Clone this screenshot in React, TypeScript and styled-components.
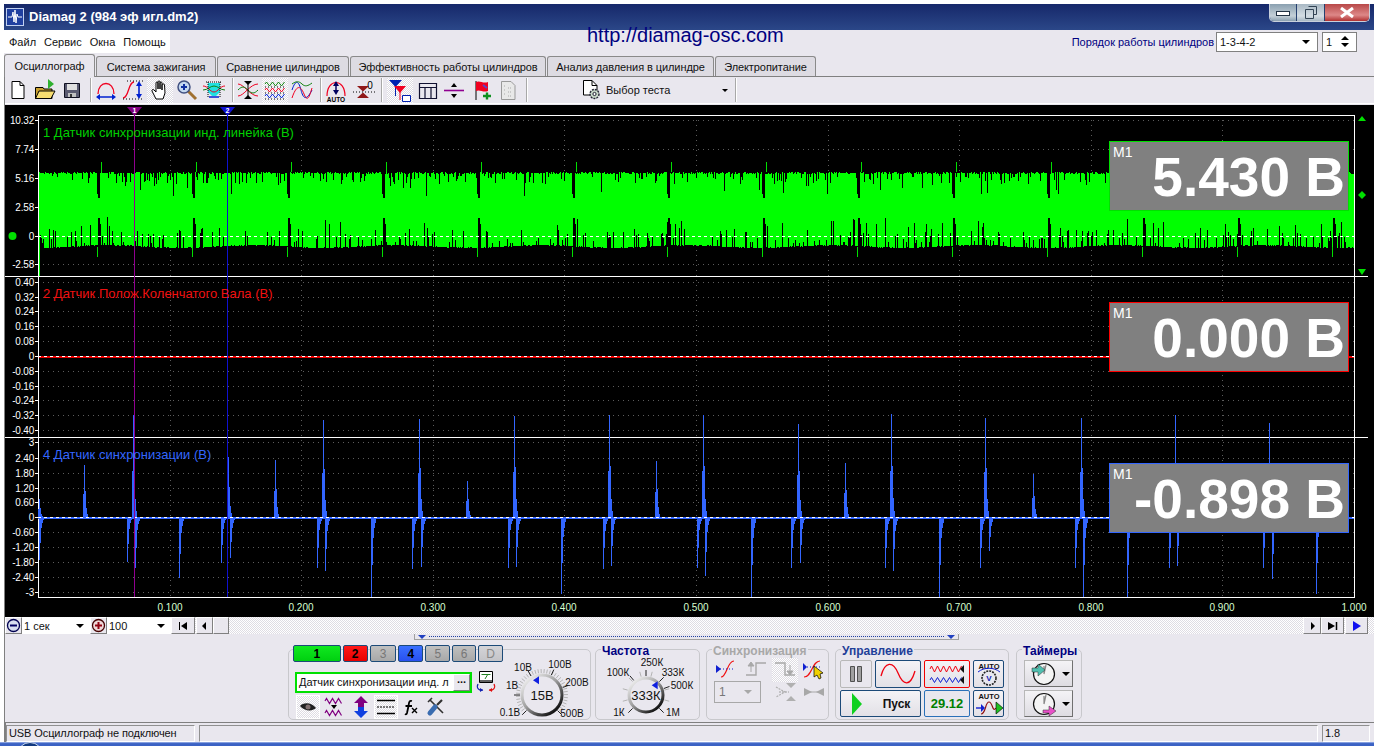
import React from 'react';
import styled, { createGlobalStyle } from 'styled-components';

const GlobalStyle = createGlobalStyle`
  html, body {
    margin: 0;
    padding: 0;
    background: #fff;
    font-family: "Liberation Sans", Arial, sans-serif;
  }
`;

const PANEL = '#e9e7ee';
const NAVY = '#000080';
const CHECKER = 'repeating-conic-gradient(#fff 0 25%, #dedce3 0 50%) 0 0 / 2px 2px';

const Screen = styled.div`
  width: 1374px;
  height: 746px;
  overflow: hidden;
  box-sizing: border-box;
  padding: 4px 0 0 4px;
  display: flex;
  flex-direction: column;
  background: #fff;
  font-size: 11px;
  color: #111;
`;

const TitleBar = styled.div`
  height: 26px;
  flex: none;
  display: flex;
  align-items: flex-start;
  background: linear-gradient(#16286a, #2b4788);
  color: #fff;
`;

const AppIcon = styled.svg`
  width: 18px;
  height: 18px;
  margin: 4px 5px 0 2px;
  flex: none;
`;

const TitleText = styled.span`
  font-size: 13px;
  font-weight: bold;
  line-height: 26px;
  white-space: nowrap;
`;

const CaptionButtons = styled.div`
  margin-left: auto;
  margin-right: 4px;
  display: flex;
  height: 17px;
  border: 1px solid #c8d0dc;
  border-top: none;
  border-radius: 0 0 5px 5px;
  overflow: hidden;
`;

const CaptionButton = styled.div<{ $w: number; $tone: string }>`
  width: ${p => p.$w}px;
  display: flex;
  align-items: center;
  justify-content: center;
  background: ${p => p.$tone};
  border-right: 1px solid #26406f;
  &:last-child { border-right: none; }
`;

const TopRow = styled.div`
  height: 23px;
  flex: none;
  display: flex;
  background: ${PANEL};
`;

const MenuBar = styled.div`
  width: 166px;
  box-sizing: border-box;
  padding-left: 5px;
  display: flex;
  gap: 8px;
  align-items: center;
  background: #fff;
  white-space: nowrap;
  font-size: 11px;
`;

const SiteLink = styled.div`
  margin-left: 417px;
  margin-top: -3px;
  font-size: 20px;
  color: ${NAVY};
  white-space: nowrap;
  line-height: 16px;
`;

const OrderBox = styled.div`
  margin-left: auto;
  margin-right: 14px;
  display: flex;
  align-items: center;
  gap: 1px;
`;

const OrderLabel = styled.span`
  color: ${NAVY};
  font-size: 11px;
  white-space: nowrap;
  margin-right: 1px;
`;

const OrderField = styled.div<{ $w: number }>`
  width: ${p => p.$w}px;
  height: 20px;
  box-sizing: border-box;
  border: 1px solid #808080;
  background: #fff;
  display: flex;
  align-items: center;
  justify-content: space-between;
  padding: 0 7px 0 3px;
  font-size: 11px;
  margin-right: 3px;
`;

const ArrowDown = styled.span`
  width: 0;
  height: 0;
  border-left: 4px solid transparent;
  border-right: 4px solid transparent;
  border-top: 4px solid #000;
`;

const SpinArrows = styled.span`
  display: flex;
  flex-direction: column;
  gap: 3px;
`;

const ArrowUp = styled.span`
  width: 0;
  height: 0;
  border-left: 4px solid transparent;
  border-right: 4px solid transparent;
  border-bottom: 4px solid #000;
`;

const TabRow = styled.div`
  height: 24px;
  flex: none;
  box-sizing: border-box;
  display: flex;
  gap: 1px;
  align-items: flex-end;
  background: ${PANEL};
  border-bottom: 1px solid #808080;
`;

const Tab = styled.div<{ $w: number; $active?: boolean }>`
  width: ${p => p.$w}px;
  height: ${p => (p.$active ? 23 : 20)}px;
  box-sizing: border-box;
  border: 1px solid #8a8a8a;
  border-bottom: none;
  border-radius: 3px 3px 0 0;
  background: ${p => (p.$active ? PANEL : '#dddbe2')};
  display: flex;
  align-items: center;
  justify-content: center;
  white-space: nowrap;
  font-size: 11px;
  letter-spacing: -0.08px;
  position: relative;
  margin-bottom: ${p => (p.$active ? -1 : 0)}px;
`;

const Body = styled.div`
  flex: none;
  border-left: 1px solid #808080;
  background: ${PANEL};
`;

const Toolbar = styled.div`
  height: 27px;
  box-sizing: border-box;
  display: flex;
  align-items: center;
  border-bottom: 1px solid #fff;
  margin-bottom: 1px;
`;

const ToolGroup = styled.div<{ $shift?: number }>`
  display: flex;
  gap: 1px;
  margin-left: ${p => p.$shift || 0}px;
`;

const ToolButton = styled.div<{ $active?: boolean }>`
  width: 26px;
  height: 25px;
  display: flex;
  align-items: center;
  justify-content: center;
  background: ${p => (p.$active ? CHECKER : 'transparent')};
`;

const ToolSep = styled.div`
  width: 1px;
  height: 24px;
  margin: 0 2px 0 5px;
  background: #a8a8a8;
  box-shadow: 1px 0 0 #fff;
`;

const TestSelect = styled.div`
  width: 201px;
  box-sizing: border-box;
  padding-left: 51px;
  display: flex;
  align-items: center;
  gap: 2px;
  font-size: 11px;
`;

const TestArrow = styled(ArrowDown)`
  margin-left: 50px;
  border-width: 3px 3px 0 3px;
`;

const PlotArea = styled.div`
  position: relative;
  height: 512px;
  background: #000;
`;

const PlotCanvas = styled.svg`
  display: block;
  width: 1369px;
  height: 512px;
  font-family: "Liberation Sans", Arial, sans-serif;
`;

const ChannelLabel = styled.div<{ $top: number; $color: string }>`
  position: absolute;
  left: 38px;
  top: ${p => p.$top}px;
  color: ${p => p.$color};
  font-size: 13px;
  line-height: 14px;
  white-space: nowrap;
`;

const Readout = styled.div<{ $top: number; $color: string }>`
  position: absolute;
  right: 25px;
  top: ${p => p.$top}px;
  width: 240px;
  height: 70px;
  box-sizing: border-box;
  background: #808080;
  border: 1px solid ${p => p.$color};
  color: #fff;
`;

const ReadoutTag = styled.span`
  position: absolute;
  left: 3px;
  top: 2px;
  font-size: 14px;
`;

const ReadoutValue = styled.div`
  text-align: right;
  padding-right: 3px;
  font-size: 55px;
  font-weight: bold;
  line-height: 70px;
  white-space: nowrap;
`;

const ScrollRow = styled.div`
  height: 17px;
  display: flex;
  align-items: stretch;
  background: ${CHECKER};
`;

const RaisedButton = styled.div<{ $w: number }>`
  width: ${p => p.$w}px;
  flex: none;
  box-sizing: border-box;
  display: flex;
  align-items: center;
  justify-content: center;
  background: ${PANEL};
  border: 1px solid;
  border-color: #fff #808080 #808080 #fff;
`;

const ScaleCombo = styled.div<{ $w: number }>`
  width: ${p => p.$w}px;
  flex: none;
  box-sizing: border-box;
  background: #fff;
  display: flex;
  align-items: center;
  justify-content: space-between;
  padding: 0 6px 0 2px;
  font-size: 11px;
`;

const ScrollGap = styled.div<{ $w: number }>`
  width: ${p => p.$w}px;
  flex: none;
`;

const ScrollTrack = styled.div`
  flex: 1;
`;

const Deck = styled.div`
  position: relative;
  height: 88px;
  box-sizing: border-box;
  padding: 15px 0 0 283px;
  display: flex;
  align-items: flex-start;
`;

const SplitHandle = styled.div`
  position: absolute;
  left: 409px;
  top: 0;
  width: 545px;
  height: 6px;
  box-sizing: border-box;
  border: 1px solid #a0a0a0;
  border-top: none;
  display: flex;
  align-items: center;
  justify-content: space-between;
  padding: 0 3px 0 3px;
`;

const SplitDots = styled.span`
  flex: 1;
  margin: 0 3px;
  border-top: 1px dotted #2040a0;
`;

const SplitArrow = styled.span`
  width: 0;
  height: 0;
  border-left: 4px solid transparent;
  border-right: 4px solid transparent;
  border-top: 4px solid #2040c0;
`;

const Group = styled.div<{ $w: number; $gap: number }>`
  position: relative;
  flex: none;
  width: ${p => p.$w}px;
  height: 71px;
  box-sizing: border-box;
  margin-right: ${p => p.$gap}px;
  border: 1px solid #c8c8cc;
  border-radius: 5px;
`;

const GroupTitle = styled.span<{ $color: string }>`
  position: absolute;
  left: 5px;
  top: -6px;
  padding: 0 1px;
  background: ${PANEL};
  color: ${p => p.$color};
  font-size: 12px;
  font-weight: bold;
  line-height: 14px;
  white-space: nowrap;
`;

const ChannelColumn = styled.div`
  position: absolute;
  left: 4px;
  top: -5px;
  width: 210px;
  display: flex;
  flex-direction: column;
  z-index: 1;
`;

const ChannelRow = styled.div`
  display: flex;
  gap: 2px;
`;

const ChannelButton = styled.div<{ $w: number; $bg: string; $fg: string }>`
  width: ${p => p.$w}px;
  height: 17px;
  box-sizing: border-box;
  border: 1px solid #1c4a78;
  border-radius: 2px;
  background: ${p => p.$bg};
  color: ${p => p.$fg};
  font-size: 12px;
  font-weight: ${p => (p.$fg === '#000' ? 'bold' : 'normal')};
  display: flex;
  align-items: center;
  justify-content: center;
`;

const SensorRow = styled.div`
  display: flex;
  align-items: center;
  margin: 8px 0 0 2px;
  gap: 3px;
`;

const SensorField = styled.div`
  width: 177px;
  height: 21px;
  box-sizing: border-box;
  border: 2px solid #00e000;
  background: #fff;
  display: flex;
  align-items: center;
  justify-content: space-between;
  padding: 0 0 0 2px;
  font-size: 11px;
  white-space: nowrap;
`;

const DotsButton = styled(RaisedButton)`
  height: 17px;
  font-size: 11px;
  font-weight: bold;
  line-height: 8px;
  align-items: flex-start;
`;

const ChannelTools = styled.div`
  display: flex;
  margin: 1px 0 0 3px;
`;

const ChannelTool = styled.div<{ $w: number; $active?: boolean }>`
  width: ${p => p.$w}px;
  height: 24px;
  box-sizing: border-box;
  display: flex;
  align-items: center;
  justify-content: center;
  background: ${p => (p.$active ? CHECKER : 'transparent')};
  border: ${p => (p.$active ? '1px solid #fff' : 'none')};
`;

const KnobSvg = styled.svg<{ $left: number }>`
  position: absolute;
  left: ${p => p.$left}px;
  top: 8px;
  font-family: "Liberation Sans", Arial, sans-serif;
`;

const SyncGrid = styled.div`
  display: grid;
  grid-template-columns: repeat(4, 29px);
  grid-auto-rows: 22px;
  gap: 1px 0;
  padding: 8px 0 0 5px;
  align-items: center;
  justify-items: center;
`;

const SyncCombo = styled.div`
  grid-column: span 2;
  width: 47px;
  height: 22px;
  box-sizing: border-box;
  justify-self: start;
  margin-left: 2px;
  border: 1px solid #a8a8a8;
  display: flex;
  align-items: center;
  justify-content: space-between;
  padding: 0 8px 0 4px;
  font-size: 12px;
  color: #777;
`;

const GreyArrow = styled(ArrowDown)`
  border-top-color: #a8a8a8;
`;

const ControlGrid = styled.div`
  display: grid;
  grid-template-columns: 32px 46px 46px 31px;
  grid-template-rows: 28px 27px;
  gap: 2px 3px;
  padding: 10px 0 0 4px;
`;

const ControlButton = styled.div<{ $border?: string; $span?: number; $flat?: boolean }>`
  grid-column: span ${p => p.$span || 1};
  box-sizing: border-box;
  border: 1px solid ${p => p.$border || '#1c4a78'};
  border-radius: 2px;
  background: ${p => (p.$flat ? PANEL : 'linear-gradient(#f4f3f6, #e2e0e6)')};
  display: flex;
  align-items: center;
  justify-content: center;
  font-weight: bold;
  font-size: 12px;
  white-space: nowrap;
`;

const StartLabel = styled.span`
  margin-left: 20px;
`;

const TimeValue = styled.span`
  color: #008000;
  font-size: 13px;
`;

const TimerColumn = styled.div`
  display: flex;
  flex-direction: column;
  gap: 3px;
  padding: 10px 0 0 7px;
`;

const TimerButton = styled.div`
  width: 49px;
  height: 27px;
  box-sizing: border-box;
  border: 1px solid;
  border-color: #b8b8b8 #707070 #707070 #b8b8b8;
  background: linear-gradient(#f4f3f6, #dedce2);
  display: flex;
  align-items: center;
  gap: 5px;
  padding-left: 6px;
`;

const StatusBar = styled.div`
  height: 20px;
  box-sizing: border-box;
  border-top: 1px solid #808080;
  border-left: 1px solid #808080;
  padding: 2px 4px 0 0;
  display: flex;
  gap: 4px;
  background: ${PANEL};
`;

const StatusCell = styled.div<{ $w?: number }>`
  ${p => (p.$w ? `width: ${p.$w}px; flex: none;` : 'flex: 1;')}
  height: 17px;
  box-sizing: border-box;
  border: 1px solid;
  border-color: #909090 #fff #fff #909090;
  padding-left: 2px;
  font-size: 11px;
  letter-spacing: -0.1px;
  line-height: 15px;
  white-space: nowrap;
`;

const Taskbar = styled.div`
  height: 4px;
  flex: 1;
  margin-left: -4px;
  background: linear-gradient(#a8bcec, #3b62c4 40%);
  display: flex;
`;

const StartOrb = styled.div`
  width: 26px;
  height: 26px;
  margin-left: 17px;
  border-radius: 50%;
  border: 1px solid #d0ddf0;
  box-sizing: border-box;
  background: #123a80;
`;

// ---- plot data ----

const makeRandom = (seed: number) => () => {
  seed = (seed * 16807) % 2147483647;
  return seed / 2147483647;
};

const X0 = 38;
const X1 = 1354;

const greenTrace = (() => {
  const r = makeRandom(4242);
  let band = 'M39 247V276';
  let notch = '';
  let top = '';
  for (let x = X0 + 1; x < X1; x++) {
    const t = 172 + r() * 2;
    const b = 246 + Math.sin(x / 23) * 1.4 + r();
    band += `M${x} ${t.toFixed(0)}V${b.toFixed(0)}`;
    const pick = r();
    if (pick < 0.2) {
      notch += `M${x} 171V${(176 + r() * (r() < 0.25 ? 20 : 8)).toFixed(0)}`;
    }
    if (pick > 0.76) {
      notch += `M${x} 249V${(243 - r() * (r() < 0.35 ? 26 : 14)).toFixed(0)}`;
    }
  }
  for (let p = 98; p < X1; p += 95) {
    notch += `M${p - 1} 171V194M${p} 171V198M${p + 1} 171V198M${p} 218V249M${p + 1} 218V249M${p + 2} 224V249`;
    top += `M${p + 3} 162V172M${p - 1} 247V257`;
  }
  return { band, notch, top };
})();

const upSpikes: [number, number][] = [
  [39, 499], [84, 465], [133, 415], [228, 457], [275, 460], [323, 420], [419, 419], [467, 481],
  [514, 416], [609, 415], [656, 461], [703, 415], [798, 424], [845, 463], [891, 414],
  [985, 418], [1033, 474], [1081, 418], [1175, 415], [1269, 423]
];

const downSpikes: [number, number][] = [
  [39, 560], [127, 562], [135, 568], [179, 578], [221, 563], [230, 558], [317, 568], [325, 571],
  [371, 597], [412, 569], [421, 567], [508, 568], [516, 567], [561, 594], [603, 569], [611, 566],
  [697, 568], [705, 576], [751, 597], [791, 568], [800, 563], [885, 568], [893, 571], [939, 597],
  [980, 568], [989, 551], [1075, 568], [1083, 597], [1127, 597], [1169, 568], [1177, 566],
  [1263, 568], [1272, 579], [1316, 594]
];

const blueTrace = (() => {
  const base = 517;
  let d = '';
  upSpikes.forEach(([x, y]) => {
    const h = base - y;
    d += `M${x} ${base}V${y}`;
    d += `M${x - 1} ${base}V${(base - h * 0.45).toFixed(0)}`;
    d += `M${x + 1} ${base}V${(base - h * 0.5).toFixed(0)}`;
    d += `M${x + 2} ${base}V${(base - h * 0.18).toFixed(0)}`;
    d += `M${x + 3} ${base}V${(base - h * 0.06).toFixed(0)}`;
  });
  downSpikes.forEach(([x, y]) => {
    const h = y - base;
    d += `M${x} ${base}V${y}`;
    d += `M${x + 1} ${base}V${(base + h * 0.6).toFixed(0)}`;
    d += `M${x + 2} ${base}V${(base + h * 0.26).toFixed(0)}`;
    d += `M${x + 3} ${base}V${(base + h * 0.14).toFixed(0)}`;
    d += `M${x + 4} ${base}V${(base + h * 0.07).toFixed(0)}`;
    d += `M${x + 5} ${base}V${(base + h * 0.03).toFixed(0)}`;
  });
  return d;
})();

const axes = [
  {
    ticks: [
      ['10.32', 120], ['7.74', 149], ['5.16', 178], ['2.58', 207], ['0', 236], ['-2.58', 264]
    ]
  },
  {
    ticks: [
      ['0.40', 282], ['0.32', 297], ['0.24', 311], ['0.16', 326], ['0.08', 341], ['0', 356],
      ['-0.08', 371], ['-0.16', 386], ['-0.24', 400], ['-0.32', 415], ['-0.40', 430]
    ]
  },
  {
    ticks: [
      ['3', 442], ['2.40', 458], ['1.80', 473], ['1.20', 488], ['0.60', 502], ['0', 517],
      ['-0.60', 532], ['-1.20', 547], ['-1.80', 562], ['-2.40', 577], ['-3', 592]
    ]
  }
] as { ticks: [string, number][] }[];

const timeTicks = ['0.100', '0.200', '0.300', '0.400', '0.500', '0.600', '0.700', '0.800', '0.900', '1.000'];

const Plot = () => (
  <PlotCanvas viewBox="5 105 1369 512" shapeRendering="crispEdges">
    {axes.map((axis, i) =>
      axis.ticks.map(([label, y]) => (
        <g key={`${i}${label}`}>
          <path d={`M${X0} ${y}H${X1}`} stroke="#5c5c5c" strokeDasharray="1 4" />
          <path d={`M35 ${y}H38`} stroke="#fff" />
          <text x={34} y={y + 4} fill="#fff" fontSize="10" textAnchor="end" letterSpacing="-0.2">{label}</text>
        </g>
      ))
    )}
    {timeTicks.map((label, i) => {
      const x = Math.round(X0 + 131.6 * (i + 1));
      return (
        <g key={label}>
          <path d={`M${x} 115V597`} stroke="#5c5c5c" strokeDasharray="1 4" />
          <text x={x} y={611} fill="#d8ffd0" fontSize="10" textAnchor="middle">{label}</text>
        </g>
      );
    })}
    <path d={greenTrace.band} stroke="#00ff00" fill="none" />
    <path d={greenTrace.notch} stroke="#000" fill="none" />
    <path d={greenTrace.top} stroke="#00e000" fill="none" />
    <path d="M38 236.5H1354" stroke="#fff" strokeDasharray="3 3" />
    <path d="M38 357H1354" stroke="#e80000" strokeWidth="2" />
    <path d="M38 356.5H1354" stroke="#fff" strokeDasharray="3 3" />
    <path d="M38.5 115.5H1354.5V597.5H38.5Z" fill="none" stroke="#fff" />
    <path d="M5 276.5H1368M5 437.5H1368" stroke="#fff" />
    <path d={blueTrace} stroke="#3366ff" fill="none" />
    <path d="M38 518H1354" stroke="#3366ff" strokeWidth="2" />
    <path d="M38 517.5H1354" stroke="#fff" strokeDasharray="3 3" />
    <path d="M134.5 113V597" stroke="#900090" />
    <path d="M227.5 113V597" stroke="#1010d0" />
    <path d="M127 107H142L134.5 116Z" fill="#800080" shapeRendering="geometricPrecision" />
    <path d="M220 107H235L227.5 116Z" fill="#1010d0" shapeRendering="geometricPrecision" />
    <text x={134.5} y={113} fill="#fff" fontSize="7" fontWeight="bold" textAnchor="middle">1</text>
    <text x={227.5} y={113} fill="#fff" fontSize="7" fontWeight="bold" textAnchor="middle">2</text>
    <circle cx={12.5} cy={236} r={4} fill="#00e000" shapeRendering="geometricPrecision" />
    <path d="M1358 121H1366L1362 116ZM1362 191L1366 195L1362 199L1358 195ZM1358 269H1366L1362 275Z" fill="#00e000" shapeRendering="geometricPrecision" />
  </PlotCanvas>
);

// ---- icons ----

const wave = (x0: number, y: number, n: number, amp: number) => {
  let d = `M${x0} ${y}`;
  for (let i = 0; i < n; i++) {
    d += `L${x0 + i * 3 + 1.5} ${y + (i % 2 ? amp : -amp)}`;
  }
  return d;
};

const Ico = ({ children, w = 24, h = 24 }: { children: React.ReactNode; w?: number; h?: number }) => (
  <svg width={w} height={h} viewBox={`0 0 ${w} ${h}`} fill="none">{children}</svg>
);

const IconNew = () => <Ico><path d="M6 3.5H14L18 7.5V20.5H6Z" fill="#fff" stroke="#000" /><path d="M14 3.5V7.5H18" stroke="#000" /></Ico>;
const IconOpen = () => (
  <Ico>
    <path d="M2.5 9.5H10L11 11H19V20.5H2.5Z" fill="#c8a030" stroke="#000" />
    <path d="M2.5 20.5L6 13H22L18 20.5Z" fill="#f6dc70" stroke="#000" />
    <path d="M15 1L21 6L15 11Z" fill="#30b030" />
  </Ico>
);
const IconSave = () => (
  <Ico>
    <path d="M4.5 5.5H19.5V19.5H4.5Z" fill="#5a5a70" stroke="#101020" />
    <path d="M7 6H17V12H7Z" fill="#e0e0e0" />
    <path d="M8 15H16V19H8Z" fill="#c0c0c0" />
    <path d="M10 16H12V19H10Z" fill="#333" />
  </Ico>
);
const IconWidth = () => (
  <Ico>
    <path d="M4 16C4 2 20 2 20 16" stroke="#f00020" strokeWidth="1.3" />
    <path d="M5 19H19" stroke="#0020d0" strokeWidth="1.5" />
    <path d="M2 19L6 16V22ZM22 19L18 16V22Z" fill="#0020d0" />
  </Ico>
);
const IconHeight = () => (
  <Ico>
    <path d="M2 20C8 20 7 4 13 4" stroke="#f00020" strokeWidth="1.3" />
    <path d="M6 3H22M2 21H22" stroke="#000" strokeDasharray="1 2" />
    <path d="M18 7V17" stroke="#0020d0" strokeWidth="1.6" />
    <path d="M18 3L15 8H21ZM18 21L15 16H21Z" fill="#0020d0" />
  </Ico>
);
const IconHand = () => (
  <Ico>
    <path d="M8 21L4 13C3.5 11.5 5 11 6 12L8 14V5C8 3.5 10 3.5 10 5V11L10 4C10 2.5 12 2.5 12 4V11V5C12 3.5 14 3.5 14 5V12V7C14 5.5 16.5 5.5 16.5 7L17 15L15 21Z" fill="#fff" stroke="#000" strokeLinejoin="round" />
  </Ico>
);
const IconZoom = () => (
  <Ico>
    <path d="M13 13L21 21" stroke="#a07030" strokeWidth="3" />
    <circle cx="9" cy="9" r="6" fill="#c4d8f0" stroke="#405080" strokeWidth="1.5" />
    <path d="M6 9H12M9 6V12" stroke="#1030a0" strokeWidth="2" />
  </Ico>
);
const IconFit = () => (
  <Ico>
    <path d="M6 5H18V14L14 18H10L6 14Z" fill="#20e0e0" />
    <path d="M1 8C6 8 8 14 12 14S18 8 23 8" stroke="#f00020" />
    <path d="M1 12C6 12 8 8 12 8S18 12 23 12" stroke="#108010" />
    <path d="M6 4V20M18 4V20M4 4H20" stroke="#000" strokeDasharray="1 1" />
    <path d="M7 19H17" stroke="#0020d0" strokeWidth="1.5" />
  </Ico>
);
const IconCross = () => (
  <Ico>
    <path d="M2 6C8 6 14 18 22 18M2 18C8 18 14 6 22 6" stroke="#f00020" />
    <path d="M2 12C6 8 8 8 12 12S18 16 22 12" stroke="#108010" />
    <path d="M12 6V18" stroke="#000" />
    <path d="M8 3H16L12 7ZM8 21H16L12 17Z" fill="#000" />
  </Ico>
);
const IconStack = () => (
  <Ico>
    <path d={wave(2, 6, 7, 2)} stroke="#108010" />
    <path d={wave(2, 12, 7, 2)} stroke="#f00020" />
    <path d={wave(2, 18, 7, 2)} stroke="#0020d0" />
    <path d="M2 9H22M2 15H22M2 21H22" stroke="#000" strokeDasharray="1 2" />
  </Ico>
);
const IconOverlay = () => (
  <Ico>
    <path d="M2 12C6 0 9 4 11 12S16 24 22 12" stroke="#0020d0" />
    <path d="M2 20C6 8 10 6 14 16S20 16 22 10" stroke="#f00020" />
    <path d="M2 6C6 3 9 3 12 6S18 8 22 5" stroke="#108010" />
  </Ico>
);
const IconAuto = () => (
  <Ico>
    <path d="M3 18C3 0 21 0 21 18" stroke="#f00020" strokeWidth="1.2" />
    <path d="M12 6V14" stroke="#000060" strokeWidth="1.5" />
    <path d="M12 3L9 8H15ZM12 17L9 12H15Z" fill="#000060" />
    <text x="12" y="24" fontSize="6.5" fontWeight="bold" fill="#000" textAnchor="middle">AUTO</text>
  </Ico>
);
const IconZero = () => (
  <Ico>
    <path d="M6 8H18L12 13.5L6 8ZM6 20H18L12 14.5Z" fill="#901818" />
    <path d="M2 14H24" stroke="#000" strokeDasharray="1 2" />
    <text x="19" y="11" fontSize="10" fill="#000" textAnchor="middle">0</text>
  </Ico>
);
const IconMarkers = () => (
  <Ico>
    <path d="M1 2H14L7.5 9Z" fill="#0020b0" />
    <path d="M7.5 2V18" stroke="#0020b0" />
    <path d="M6 8H18L12 15Z" fill="#f00020" />
    <path d="M12 8V22" stroke="#f00020" />
    <path d="M14.5 17.5H22.5V23.5H14.5Z" fill="#fff" stroke="#0020b0" />
  </Ico>
);
const IconGrid = () => (
  <Ico>
    <path d="M4.5 5.5H21.5V20.5H4.5ZM4.5 9.5H21.5M10 9.5V20.5M16 9.5V20.5" stroke="#101030" strokeWidth="1.2" />
  </Ico>
);
const IconSplit = () => (
  <Ico>
    <path d="M2 12.5H22" stroke="#900090" strokeWidth="1.6" />
    <path d="M12 5L9 9H15ZM12 20L9 16H15Z" fill="#000" />
  </Ico>
);
const IconFlag = () => (
  <Ico>
    <path d="M7 3V22" stroke="#000" />
    <path d="M7 4C11 2 14 6 19 4V13C14 15 11 11 7 13Z" fill="#f00020" />
    <path d="M14 7L18 10" stroke="#6040c0" strokeWidth="2" />
    <path d="M14 18H22M18 14.5V21.5" stroke="#109020" strokeWidth="2.4" />
  </Ico>
);
const IconChecklist = () => (
  <Ico>
    <path d="M5.5 3.5H15L19 7.5V21.5H5.5Z" fill="#e8e8e8" stroke="#999" />
    <path d="M8 8H10M8 12H10M8 16H10M12 10H16M12 14H16M12 18H16" stroke="#aaa" strokeDasharray="1 1" />
  </Ico>
);
const IconTest = () => (
  <Ico>
    <path d="M3.5 2.5H12L17 7.5V17H3.5Z" fill="#fff" stroke="#000" />
    <path d="M12 2.5V7.5H17" stroke="#000" />
    <circle cx="14.5" cy="16" r="4.5" fill="#c8d8c8" stroke="#223" strokeWidth="1.4" strokeDasharray="2 1" />
    <circle cx="14.5" cy="16" r="1.6" fill="#fff" stroke="#223" />
  </Ico>
);

const IconMinus = () => (
  <Ico w={15} h={15}>
    <circle cx="7.5" cy="7.5" r="6" fill="#d8e0f0" stroke="#000050" strokeWidth="1.3" />
    <path d="M4 7.5H11" stroke="#000060" strokeWidth="2" />
  </Ico>
);
const IconPlus = () => (
  <Ico w={15} h={15}>
    <circle cx="7.5" cy="7.5" r="6" fill="#f0d8d8" stroke="#400" strokeWidth="1.3" />
    <path d="M4 7.5H11M7.5 4V11" stroke="#900010" strokeWidth="2" />
  </Ico>
);
const IconFirst = () => <Ico w={10} h={8}><path d="M1 0V8M2 0V8M9 0V8L3 4Z" stroke="none" fill="#000" /><path d="M1.5 0V8" stroke="#000" /></Ico>;
const IconPrev = () => <Ico w={5} h={8}><path d="M4 0V8L0 4Z" fill="#000" /></Ico>;
const IconNext = () => <Ico w={5} h={8}><path d="M1 0V8L5 4Z" fill="#000" /></Ico>;
const IconLast = () => <Ico w={10} h={8}><path d="M0 0V8L7 4Z" fill="#000" /><path d="M8.5 0V8" stroke="#000" strokeWidth="1.5" /></Ico>;
const IconRun = () => <Ico w={9} h={10}><path d="M1 0V10L9 5Z" fill="#1010f0" /></Ico>;

const IconMeter = () => (
  <Ico w={22} h={24}>
    <path d="M4.5 1.5H17.5V12.5H4.5Z" fill="#fff" stroke="#000" />
    <path d="M5 10H17V12H5Z" fill="#606060" />
    <path d="M6.5 4.5H15.5M10 9L13 4" stroke="#208020" />
    <path d="M3 14C1 18 4 21 8 20" stroke="#1020b0" strokeWidth="1.2" />
    <path d="M8 20L5 18V22Z" fill="#1020b0" />
    <path d="M19 14C21 18 18 21 14 20" stroke="#e01010" strokeWidth="1.2" />
    <path d="M14 20L17 18V22Z" fill="#e01010" />
  </Ico>
);
const IconEye = () => (
  <Ico w={22} h={20}>
    <path d="M3 9C6 5 15 5 19 11C15 15 7 14 3 9Z" fill="#202020" />
    <circle cx="11" cy="10" r="2.5" fill="#807070" />
  </Ico>
);
const IconWaves = () => (
  <Ico w={20} h={22}>
    <path d={wave(1, 5, 6, 2.5)} stroke="#800080" strokeWidth="1.2" />
    <path d={wave(1, 17, 6, 2.5)} stroke="#800080" strokeWidth="1.2" />
    <path d="M7 9H13L10 13Z" fill="#000" />
  </Ico>
);
const IconUpDown = () => (
  <Ico w={18} h={24}>
    <path d="M9 1L16 8H12V12H6V8H2Z" fill="#800080" />
    <path d="M9 23L16 16H12V12H6V16H2Z" fill="#1040e0" />
  </Ico>
);
const IconLines = () => (
  <Ico w={20} h={20}>
    <path d="M1 3.5H19M1 16.5H19" stroke="#000" strokeWidth="1.4" />
    <path d="M1 10H19" stroke="#000" strokeDasharray="2 1" />
  </Ico>
);
const IconFx = () => (
  <Ico w={18} h={18}>
    <path d="M10 3C7 2 7 5 6.5 8L5 15C4.5 17 3 16 3 16M3.5 8H10" stroke="#000" strokeWidth="1.8" />
    <path d="M10 10L15 15M15 10L10 15" stroke="#000" strokeWidth="1.4" />
  </Ico>
);
const IconTools = () => (
  <Ico w={20} h={20}>
    <path d="M4 3L17 16" stroke="#303030" strokeWidth="1.6" />
    <path d="M2 5L6 1" stroke="#303030" strokeWidth="1.6" />
    <path d="M16 3L11 8" stroke="#303030" strokeWidth="2.2" />
    <path d="M9 10L4 16" stroke="#3a6cb0" strokeWidth="5" strokeLinecap="round" />
  </Ico>
);

const Knob = ({ left, cx, cy, r, w, h, value, id, labels, dense, markerAngle }: {
  left: number; cx: number; cy: number; r: number; w: number; h: number; value: string; id: string;
  labels: [string, number, number, number][]; dense: boolean; markerAngle: number;
}) => {
  const ticks: React.ReactNode[] = [];
  const step = dense ? 7 : 30;
  for (let a = -225; a <= 45; a += step) {
    const rad = (a * Math.PI) / 180;
    const outer = dense ? r + 6 : r + 7;
    ticks.push(
      <path key={a} d={`M${cx + Math.cos(rad) * (r + 2)} ${cy + Math.sin(rad) * (r + 2)}L${cx + Math.cos(rad) * outer} ${cy + Math.sin(rad) * outer}`} stroke="#b4b4b4" />
    );
  }
  const mr = (markerAngle * Math.PI) / 180;
  const mx = cx + Math.cos(mr) * (r - 4);
  const my = cy + Math.sin(mr) * (r - 4);
  return (
    <KnobSvg $left={left} width={w} height={h} viewBox={`0 0 ${w} ${h}`}>
      <defs>
        <linearGradient id={id} x1="0.15" y1="0.1" x2="0.85" y2="0.9">
          <stop offset="0" stopColor="#e8e8e8" />
          <stop offset="0.45" stopColor="#a0a0a0" />
          <stop offset="1" stopColor="#101010" />
        </linearGradient>
      </defs>
      {ticks}
      {labels.map(([text, x, y, angle]) => {
        const rad = (angle * Math.PI) / 180;
        return (
          <g key={text}>
            <path d={`M${cx + Math.cos(rad) * (r + 2)} ${cy + Math.sin(rad) * (r + 2)}L${cx + Math.cos(rad) * (r + 8)} ${cy + Math.sin(rad) * (r + 8)}`} stroke="#222" />
            <text x={x} y={y} fontSize="10" fill="#111" textAnchor="middle">{text}</text>
          </g>
        );
      })}
      <circle cx={cx} cy={cy} r={r} fill={PANEL} stroke={`url(#${id})`} strokeWidth="3" />
      <path d={`M${mx - 3} ${my}L${mx + 3} ${my - 4}V${my + 4}Z`} fill="#1020e0" />
      <text x={cx} y={cy + 5} fontSize="13" fill="#111" textAnchor="middle">{value}</text>
    </KnobSvg>
  );
};

const IconEdgeAuto = ({ grey }: { grey?: boolean }) => (
  <Ico>
    <path d="M6 20C12 20 12 4 19 4" stroke={grey ? '#bbb' : '#f01010'} strokeWidth="1.2" />
    <path d="M5 12H20" stroke="#1020d0" strokeDasharray="1 2" />
    <path d="M1 8L6 12L1 16Z" fill="#1020d0" />
  </Ico>
);
const IconStepUp = () => (
  <Ico>
    <path d="M2 18H12V6H22" stroke="#a8a8a8" strokeWidth="1.4" />
    <path d="M7 7V15M7 5L4 9H10Z" stroke="#a8a8a8" fill="#a8a8a8" />
  </Ico>
);
const IconStepDown = () => (
  <Ico>
    <path d="M2 6H12V18H22" stroke="#a8a8a8" strokeWidth="1.4" />
    <path d="M17 8V15M17 18L14 14H20Z" stroke="#a8a8a8" fill="#a8a8a8" />
  </Ico>
);
const IconEdgeCursor = () => (
  <Ico>
    <path d="M2 20C10 20 10 4 18 4" stroke="#f01010" strokeWidth="1.2" />
    <path d="M5 10H20" stroke="#1020d0" strokeDasharray="1 2" />
    <path d="M1 6L5 10L1 14Z" fill="#1020d0" />
    <path d="M12 9V20L15 18L17 22L19 21L18 17L21 16Z" fill="#f0d000" stroke="#000" strokeWidth="0.7" />
  </Ico>
);
const IconMergeA = () => (
  <Ico>
    <path d="M3 7L12 12L3 17" stroke="#b0b0b0" strokeWidth="1.2" strokeDasharray="2 1" />
    <path d="M6 12H16" stroke="#a0a0a0" strokeDasharray="2 1" />
    <path d="M13 3H23L18 8ZM13 21H23L18 16Z" fill="#b0b0b0" />
  </Ico>
);
const IconMergeB = () => <Ico><path d="M2 8L10 12L2 16ZM22 8L14 12L22 16Z" fill="#a8a8a8" /><path d="M8 12H16" stroke="#a8a8a8" /></Ico>;

const IconPause = () => <Ico w={16} h={20}><path d="M2.5 2.5H6.5V17.5H2.5ZM9.5 2.5H13.5V17.5H9.5Z" fill="#a0a0a0" stroke="#505050" /></Ico>;
const IconSine = () => <Ico w={36} h={22}><path d="M1 13C5 -2 13 -2 18 10S30 25 35 8" stroke="#f00010" strokeWidth="1.3" /></Ico>;
const IconDualWave = () => (
  <Ico w={36} h={22}>
    <path d={wave(1, 6, 11, 3)} stroke="#f00010" />
    <path d="M35 2V10L31 6Z" fill="#101010" />
    <path d={wave(1, 17, 11, 2.5)} stroke="#1020d0" />
    <path d="M35 13V21L31 17Z" fill="#101010" />
  </Ico>
);
const IconAutoMeter = () => (
  <Ico w={28} h={26}>
    <text x="14" y="8" fontSize="7.5" fontWeight="bold" fill="#111" textAnchor="middle">AUTO</text>
    <path d="M3 11C9 6 19 6 25 11" stroke="#1020d0" />
    <circle cx="14" cy="17" r="7" fill="#e8e8f0" stroke="#222" strokeWidth="1.6" strokeDasharray="2 1" />
    <text x="14" y="20" fontSize="8" fontWeight="bold" fill="#1020b0" textAnchor="middle">V</text>
  </Ico>
);
const IconAutoTrigger = () => (
  <Ico w={28} h={26}>
    <text x="14" y="8" fontSize="7.5" fontWeight="bold" fill="#111" textAnchor="middle">AUTO</text>
    <path d="M6 23C11 23 10 11 14 11S17 22 21 17" stroke="#901010" strokeWidth="1.2" />
    <path d="M1 17H8" stroke="#1020d0" strokeWidth="1.4" />
    <path d="M10 17L6 13V21Z" fill="#1020d0" />
    <path d="M21 11L28 17L21 23Z" fill="#20c020" stroke="#000" strokeWidth="0.6" />
  </Ico>
);
const IconPlay = () => <Ico w={12} h={24}><path d="M1 1L11 12L1 23Z" fill="#10d020" /></Ico>;

const IconClock = ({ from, tone }: { from?: boolean; tone: string }) => (
  <Ico w={26} h={26}>
    <circle cx="13" cy="13" r="10.5" fill="#f4f4f4" stroke="#111" strokeWidth="1.2" />
    <path d="M13 13L15 4M13 13V5" stroke="#888" strokeWidth="1.2" />
    {from
      ? <path d="M1 7H7V3L14 9L7 15V11H1Z" fill={tone} stroke="#333" strokeWidth="0.5" />
      : <path d="M12 19H18V15L25 20L18 25V22H12Z" fill={tone} stroke="#333" strokeWidth="0.5" />}
  </Ico>
);

const tabs = [
  { label: 'Осциллограф', w: 91 },
  { label: 'Система зажигания', w: 120 },
  { label: 'Сравнение цилиндров', w: 132 },
  { label: 'Эффективность работы цилиндров', w: 196 },
  { label: 'Анализ давления в цилиндре', w: 167 },
  { label: 'Электропитание', w: 101 }
];

const channels = [
  { label: '1', w: 48, bg: 'linear-gradient(#10e820, #00d010)', fg: '#000' },
  { label: '2', w: 25, bg: 'linear-gradient(#ff1818, #e80000)', fg: '#000' },
  { label: '3', w: 27, bg: 'linear-gradient(#c0c0c0, #a8a8a8)', fg: '#777' },
  { label: '4', w: 25, bg: 'linear-gradient(#3a70ff, #2850f0)', fg: '#000' },
  { label: '5', w: 25, bg: 'linear-gradient(#c0c0c0, #a8a8a8)', fg: '#777' },
  { label: '6', w: 24, bg: 'linear-gradient(#c0c0c0, #a8a8a8)', fg: '#777' },
  { label: 'D', w: 25, bg: 'linear-gradient(#d4d4d8, #c4c4c8)', fg: '#888' }
];

const traces = [
  { top: 21, tagTop: 36, color: '#00d000', text: '1 Датчик синхронизации инд. линейка (В)', value: '5.430 В', edge: '#00e000' },
  { top: 182, tagTop: 197, color: '#f01010', text: '2 Датчик Полож.Коленчатого Вала (В)', value: '0.000 В', edge: '#ff0000' },
  { top: 343, tagTop: 358, color: '#3366ff', text: '4 Датчик синхронизации (В)', value: '-0.898 В', edge: '#3366ff' }
];

export default function App() {
  return (
    <Screen>
      <GlobalStyle />
      <TitleBar>
        <AppIcon viewBox="0 0 18 18">
          <rect x="0.5" y="0.5" width="17" height="17" fill="#2040a0" stroke="#c0d0f0" />
          <path d="M2 9H6L7 4L8 14L9 2L10 15L11 6L12 9H16" stroke="#fff" fill="none" />
        </AppIcon>
        <TitleText>Diamag 2 (984 эф игл.dm2)</TitleText>
        <CaptionButtons>
          <CaptionButton $w={26} $tone="linear-gradient(#8aa0b0, #c4d0d8 70%, #8aa0b0)">
            <svg width="14" height="8"><rect x="0.5" y="2.5" width="13" height="4" fill="#fff" stroke="#234" /></svg>
          </CaptionButton>
          <CaptionButton $w={27} $tone="linear-gradient(#a8b8c4, #d4dde4 70%, #a8b8c4)">
            <svg width="12" height="13"><path d="M3.5 .5H11.5V8.5H9M.5 3.5H8.5V12.5H.5Z" fill="none" stroke="#345" /></svg>
          </CaptionButton>
          <CaptionButton $w={44} $tone="linear-gradient(#b84848, #d88 65%, #b03030)">
            <svg width="16" height="11"><path d="M2 1L14 10M14 1L2 10" stroke="#fff" strokeWidth="3" /></svg>
          </CaptionButton>
        </CaptionButtons>
      </TitleBar>

      <TopRow>
        <MenuBar>
          <span>Файл</span>
          <span>Сервис</span>
          <span>Окна</span>
          <span>Помощь</span>
        </MenuBar>
        <SiteLink>http://diamag-osc.com</SiteLink>
        <OrderBox>
          <OrderLabel>Порядок работы цилиндров</OrderLabel>
          <OrderField $w={102}>1-3-4-2<ArrowDown /></OrderField>
          <OrderField $w={35}>1<SpinArrows><ArrowUp /><ArrowDown /></SpinArrows></OrderField>
        </OrderBox>
      </TopRow>

      <TabRow>
        {tabs.map((tab, i) => (
          <Tab key={tab.label} $w={tab.w} $active={i === 0}>{tab.label}</Tab>
        ))}
      </TabRow>

      <Body>
        <Toolbar>
          <ToolGroup>
            <ToolButton><IconNew /></ToolButton>
            <ToolButton><IconOpen /></ToolButton>
            <ToolButton><IconSave /></ToolButton>
          </ToolGroup>
          <ToolSep />
          <ToolGroup>
            <ToolButton><IconWidth /></ToolButton>
            <ToolButton><IconHeight /></ToolButton>
            <ToolButton $active><IconHand /></ToolButton>
            <ToolButton><IconZoom /></ToolButton>
            <ToolButton><IconFit /></ToolButton>
          </ToolGroup>
          <ToolSep />
          <ToolGroup>
            <ToolButton><IconCross /></ToolButton>
            <ToolButton $active><IconStack /></ToolButton>
            <ToolButton><IconOverlay /></ToolButton>
          </ToolGroup>
          <ToolSep />
          <ToolGroup>
            <ToolButton><IconAuto /></ToolButton>
            <ToolButton><IconZero /></ToolButton>
          </ToolGroup>
          <ToolSep />
          <ToolGroup $shift={3}>
            <ToolButton $active><IconMarkers /></ToolButton>
            <ToolButton><IconGrid /></ToolButton>
            <ToolButton><IconSplit /></ToolButton>
            <ToolButton><IconFlag /></ToolButton>
            <ToolButton><IconChecklist /></ToolButton>
          </ToolGroup>
          <ToolSep />
          <TestSelect>
            <IconTest />
            Выбор теста
            <TestArrow />
          </TestSelect>
          <ToolSep />
        </Toolbar>

        <PlotArea>
          <Plot />
          {traces.map(trace => (
            <React.Fragment key={trace.text}>
              <ChannelLabel $top={trace.top} $color={trace.color}>{trace.text}</ChannelLabel>
              <Readout $top={trace.tagTop} $color={trace.edge}>
                <ReadoutTag>M1</ReadoutTag>
                <ReadoutValue>{trace.value}</ReadoutValue>
              </Readout>
            </React.Fragment>
          ))}
        </PlotArea>

        <ScrollRow>
          <RaisedButton $w={17}><IconMinus /></RaisedButton>
          <ScaleCombo $w={68}>1 сек<ArrowDown /></ScaleCombo>
          <RaisedButton $w={17}><IconPlus /></RaisedButton>
          <ScaleCombo $w={64}>100<ArrowDown /></ScaleCombo>
          <RaisedButton $w={24}><IconFirst /></RaisedButton>
          <ScrollGap $w={1} />
          <RaisedButton $w={17}><IconPrev /></RaisedButton>
          <RaisedButton $w={16} />
          <ScrollTrack />
          <RaisedButton $w={18}><IconNext /></RaisedButton>
          <RaisedButton $w={23}><IconLast /></RaisedButton>
          <ScrollGap $w={1} />
          <RaisedButton $w={23}><IconRun /></RaisedButton>
          <ScrollGap $w={6} />
        </ScrollRow>

        <Deck>
          <SplitHandle>
            <SplitArrow />
            <SplitDots />
            <SplitArrow />
          </SplitHandle>

          <Group $w={303} $gap={4}>
            <Knob
              id="voltKnob" left={204} cx={49} cy={37} r={20} w={98} h={62} value="15В" dense markerAngle={-112}
              labels={[
                ['0.1В', 17, 58, 135], ['1В', 19, 31, 180], ['10В', 30, 13, 240],
                ['100В', 67, 10, 295], ['200В', 84, 28, 340], ['500В', 79, 59, 45]
              ]}
            />
            <ChannelColumn>
              <ChannelRow>
                {channels.map(ch => (
                  <ChannelButton key={ch.label} $w={ch.w} $bg={ch.bg} $fg={ch.fg}>{ch.label}</ChannelButton>
                ))}
              </ChannelRow>
              <SensorRow>
                <SensorField>
                  Датчик синхронизации инд. л
                  <DotsButton $w={17}>...</DotsButton>
                </SensorField>
                <IconMeter />
              </SensorRow>
              <ChannelTools>
                <ChannelTool $w={24} $active><IconEye /></ChannelTool>
                <ChannelTool $w={28}><IconWaves /></ChannelTool>
                <ChannelTool $w={26}><IconUpDown /></ChannelTool>
                <ChannelTool $w={24} $active><IconLines /></ChannelTool>
                <ChannelTool $w={26}><IconFx /></ChannelTool>
                <ChannelTool $w={24}><IconTools /></ChannelTool>
              </ChannelTools>
            </ChannelColumn>
          </Group>

          <Group $w={105} $gap={6}>
            <GroupTitle $color={NAVY}>Частота</GroupTitle>
            <Knob
              id="rateKnob" left={4} cx={46} cy={37} r={17} w={98} h={62} value="333К" dense={false} markerAngle={-48}
              labels={[
                ['1К', 19, 58, 135], ['100К', 18, 18, 230], ['250К', 52, 8, 270],
                ['333К', 73, 18, 315], ['500К', 82, 31, 340], ['1М', 73, 58, 45]
              ]}
            />
          </Group>

          <Group $w={123} $gap={6}>
            <GroupTitle $color="#a8a8a8">Синхронизация</GroupTitle>
            <SyncGrid>
              <IconEdgeAuto />
              <IconStepUp />
              <ToolButton $active><IconStepDown /></ToolButton>
              <IconEdgeCursor />
              <SyncCombo>1<GreyArrow /></SyncCombo>
              <IconMergeA />
              <IconMergeB />
            </SyncGrid>
          </Group>

          <Group $w={174} $gap={7}>
            <GroupTitle $color="#1f3f99">Управление</GroupTitle>
            <ControlGrid>
              <ControlButton $border="#b8b8b8" $flat><IconPause /></ControlButton>
              <ControlButton><IconSine /></ControlButton>
              <ControlButton $border="#f00000"><IconDualWave /></ControlButton>
              <ControlButton><IconAutoMeter /></ControlButton>
              <ControlButton $span={2}>
                <IconPlay />
                <StartLabel>Пуск</StartLabel>
              </ControlButton>
              <ControlButton $border="#2a70b8" $flat><TimeValue>29.12</TimeValue></ControlButton>
              <ControlButton><IconAutoTrigger /></ControlButton>
            </ControlGrid>
          </Group>

          <Group $w={66} $gap={0}>
            <GroupTitle $color={NAVY}>Таймеры</GroupTitle>
            <TimerColumn>
              <TimerButton><IconClock from tone="#50c0b0" /><ArrowDown /></TimerButton>
              <TimerButton><IconClock tone="#e850c8" /><ArrowDown /></TimerButton>
            </TimerColumn>
          </Group>
        </Deck>

        <StatusBar>
          <StatusCell $w={189}>USB Осциллограф не подключен</StatusCell>
          <StatusCell />
          <StatusCell $w={48}>1.8</StatusCell>
        </StatusBar>
      </Body>

      <Taskbar>
        <StartOrb />
      </Taskbar>
    </Screen>
  );
}
